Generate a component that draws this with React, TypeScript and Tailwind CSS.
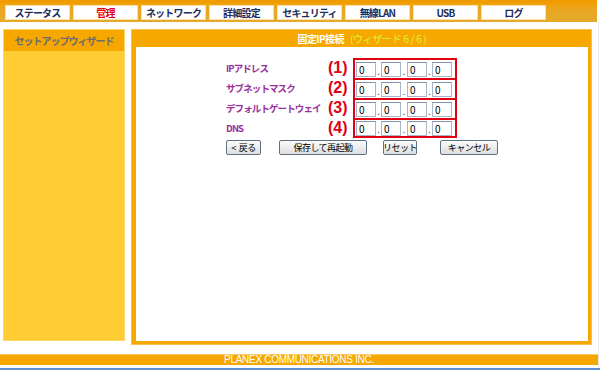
const tabs = [
  { label: 'ステータス' },
  { label: '管理', active: true },
  { label: 'ネットワーク' },
  { label: '詳細設定' },
  { label: 'セキュリティ' },
  { label: '無線LAN' },
  { label: 'USB' },
  { label: 'ログ' },
]

const rows = [
  { label: 'IPアドレス', num: '(1)' },
  { label: 'サブネットマスク', num: '(2)' },
  { label: 'デフォルトゲートウェイ', num: '(3)' },
  { label: 'DNS', num: '(4)' },
]

function Octet() {
  return (
    <div className="w-[20px] h-[15px] border border-[#a7b6c8] border-t-[#7f93ab] bg-white text-[10px] leading-[13px] pl-[2px] text-black">
      0
    </div>
  )
}

function Button({ children, className }: { children: React.ReactNode; className?: string }) {
  return (
    <button
      className={`h-[15px] border border-[#5f6f84] rounded-[2px] bg-gradient-to-b from-[#fbfbfb] to-[#dedede] text-[9px] tracking-[-0.5px] leading-[13px] text-black flex items-center justify-center whitespace-nowrap ${className ?? ''}`}
    >
      {children}
    </button>
  )
}

export default function App() {
  return (
    <div
      className="w-[600px] h-[370px] bg-white relative overflow-hidden"
      style={{ fontFamily: '"Noto Sans CJK JP", "Liberation Sans", sans-serif' }}
    >
      {/* top menu */}
      <div className="w-[597px] h-[22px] bg-gradient-to-b from-[#f0a000] via-[#e8a826] to-[#e6a92a] border-t-[3px] border-[#f09c00]">
        <div className="flex gap-[3px] pl-[5px] pt-[2px]">
          {tabs.map((t) => (
            <div
              key={t.label}
              className={`w-[65px] h-[15px] bg-white border border-[#fbe2a4] flex items-center justify-center text-[10px] tracking-[-0.8px] font-bold leading-none whitespace-nowrap ${
                t.active ? 'text-[#e60012]' : 'text-[#1d2d5c]'
              }`}
            >
              {t.label}
            </div>
          ))}
        </div>
      </div>

      {/* content */}
      <div className="flex pl-[3px] mt-[7px]">
        <div className="w-[122px] h-[312px] bg-[#ffcc33] border border-[#fcd66a] flex flex-col">
          <div className="h-[21px] bg-[#f6a800] flex items-center justify-center text-[10px] tracking-[-1px] text-[#6b6b6b] font-bold whitespace-nowrap">
            セットアップウィザード
          </div>
        </div>

        <div className="ml-[6px] w-[461px] h-[316px] bg-[#f6a800] flex flex-col pl-[4px] pr-[3px] pb-[3px] border border-[#fbc04a]">
          <div className="h-[17px] flex items-center justify-center text-[10px] font-bold gap-[6px] whitespace-nowrap">
            <span className="text-white tracking-[-0.6px]">固定IP接続</span>
            <span className="text-[#d8f53a] font-normal tracking-[-0.3px]">(ウィザード 6 / 6 )</span>
          </div>
          <div className="flex-1 bg-white pl-[90px] pt-[11px]">
            <div className="flex">
              <div className="w-[102px] flex flex-col">
                {rows.map((r) => (
                  <div
                    key={r.label}
                    className="h-[20px] flex items-center text-[9.5px] tracking-[-0.9px] font-bold text-[#9a2f9e] whitespace-nowrap"
                  >
                    {r.label}
                  </div>
                ))}
              </div>
              <div className="w-[25px] flex flex-col">
                {rows.map((r) => (
                  <div
                    key={r.num}
                    className="h-[20px] flex items-center text-[16px] font-bold text-[#e00012] leading-none"
                    style={{ fontFamily: '"Liberation Sans", sans-serif' }}
                  >
                    {r.num}
                  </div>
                ))}
              </div>
              <div className="w-[104px] flex flex-col">
                {rows.map((r, i) => (
                  <div
                    key={r.label}
                    className={`h-[20px] border-x-2 border-t-2 border-[#e00012] flex items-center pl-[1px] ${
                      i === rows.length - 1 ? 'border-b-2' : ''
                    }`}
                  >
                    <Octet />
                    <span className="w-[5px] text-center text-[9px] leading-none self-end pb-[2px] text-[#555]">.</span>
                    <Octet />
                    <span className="w-[6px] text-center text-[9px] leading-none self-end pb-[2px] text-[#555]">.</span>
                    <Octet />
                    <span className="w-[5px] text-center text-[9px] leading-none self-end pb-[2px] text-[#555]">.</span>
                    <Octet />
                  </div>
                ))}
              </div>
            </div>

            <div className="flex mt-[2px]">
              <Button className="w-[35px] gap-[3px]">
                <span>&lt;</span>
                <span>戻る</span>
              </Button>
              <Button className="w-[88px] ml-[18px]">保存して再起動</Button>
              <Button className="w-[34px] ml-[16px]">リセット</Button>
              <Button className="w-[58px] ml-[23px]">キャンセル</Button>
            </div>
          </div>
        </div>
      </div>

      {/* footer */}
      <div className="absolute left-0 top-[354px] w-[598px] h-[11px] bg-[#f6a800] border-t border-[#fcc860] flex items-center justify-center">
        <span className="text-[10px] leading-none text-white tracking-[-0.3px]" style={{ fontFamily: '"Liberation Sans", sans-serif' }}>
          PLANEX COMMUNICATIONS INC.
        </span>
      </div>
      <div className="absolute left-0 top-[368px] w-[600px] h-[2px] bg-[#5b8fd2]" />
      <div className="absolute left-[598px] top-[22px] w-[1px] h-[346px] bg-[#ececec]" />
    </div>
  )
}
